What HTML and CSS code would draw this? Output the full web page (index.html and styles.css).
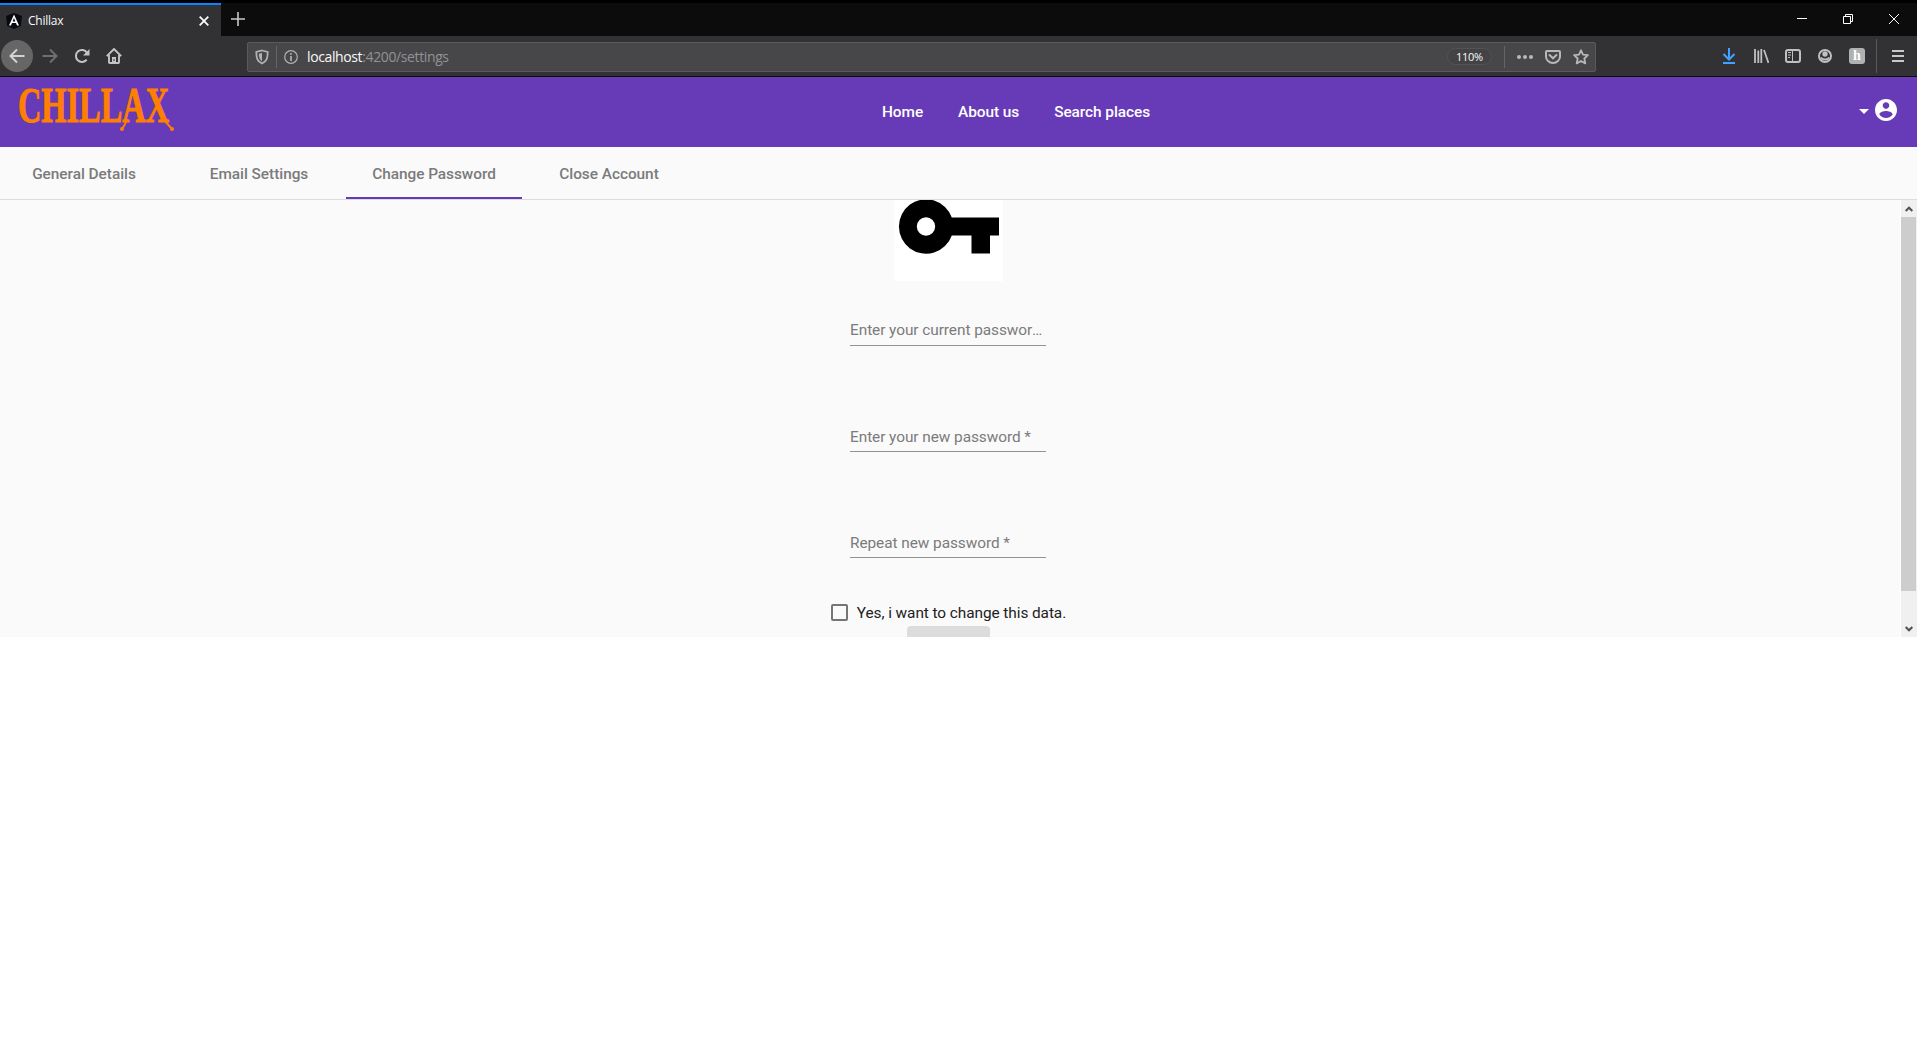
FILE: index.html
```html
<!DOCTYPE html>
<html lang="en">
<head>
<meta charset="utf-8">
<title>Chillax</title>
<link rel="stylesheet" href="styles.css">
</head>
<body>
<div class="titlebar">
  <div class="browser-tab">
    <svg class="favicon" width="16" height="16" viewBox="0 0 16 16"><path d="M8 0l8 3-1.200 10L8 16l-6.800-3L0 3z" fill="#080a12"/><path d="M8 1.500L3 12.500h2l1-2.500h4l1 2.500h2zM8 5l1.400 3.500H6.600z" fill="#fff" fill-rule="evenodd"/></svg>
    <span class="tab-title">Chillax</span>
    <svg class="tab-close" width="10" height="10" viewBox="0 0 10 10"><path d="M.7.7l8.600 8.600M9.300.7L.7 9.300" stroke="#f9f9fa" stroke-width="1.800"/></svg>
  </div>
  <svg class="new-tab" width="14" height="14" viewBox="0 0 14 14"><path d="M7 0v14M0 7h14" stroke="#c8c8c8" stroke-width="1.600"/></svg>
  <div class="window-controls">
    <svg width="10" height="10" viewBox="0 0 10 10"><path d="M0 4.500h10" stroke="#fff"/></svg>
    <svg width="10" height="10" viewBox="0 0 10 10"><path d="M.5 2.500h7v7h-7zM2.500 2.500v-2h7v7h-2" fill="none" stroke="#fff"/></svg>
    <svg width="10" height="10" viewBox="0 0 10 10"><path d="M0 0l10 10M10 0L0 10" stroke="#fff"/></svg>
  </div>
</div>
<div class="toolbar">
  <div class="nav-buttons">
    <span class="back"><svg width="16" height="16" viewBox="0 0 16 16"><path d="M15.500 8H1.500M8 1.500L1.500 8 8 14.500" fill="none" stroke="#d2d2d3" stroke-width="2"/></svg></span>
    <svg class="forward" width="16" height="16" viewBox="0 0 16 16"><path d="M.5 8h14M8 1.500L14.500 8 8 14.500" fill="none" stroke="#6f6f71" stroke-width="2"/></svg>
    <svg class="reload" width="16" height="16" viewBox="0 0 16 16"><path d="M12.700 11.600A6 6 0 1 1 13 4.700" fill="none" stroke="#c4c4c5" stroke-width="2"/><path d="M15.500 1v6.500H9z" fill="#c4c4c5"/></svg>
    <svg class="home" width="16" height="16" viewBox="0 0 16 16"><path d="M.8 8.200L8 1l7.200 7.200M3 7v7.200q0 .8.800.8h8.400q.8 0 .8-.8V7" fill="none" stroke="#c4c4c5" stroke-width="1.900"/><path d="M6 9h4v6H6z" fill="#c4c4c5"/><path d="M8 11v2" stroke="#323234"/></svg>
  </div>
  <div class="address">
    <svg class="shield" width="14" height="16" viewBox="0 0 14 16"><path d="M7 1.500L12.700 3c0 6-.8 9-5.700 11.500C2.100 12 1.300 9 1.300 3z" fill="none" stroke="#b1b1b3" stroke-width="1.800"/><path d="M7 4v8.200C4.500 10.500 3.900 8.500 3.800 4.700z" fill="#b1b1b3"/></svg>
    <i class="divider"></i>
    <svg class="info" width="14" height="14" viewBox="0 0 14 14"><circle cx="7" cy="7" r="6.300" fill="none" stroke="#b1b1b3" stroke-width="1.200"/><path d="M7 3v1.800M7 6v5" stroke="#b1b1b3" stroke-width="1.700"/></svg>
    <span class="url"><b>localhost</b>:4200/settings</span>
    <span class="zoom">110%</span>
    <i class="divider right"></i>
    <svg class="dots" width="16" height="4" viewBox="0 0 16 4"><g fill="#b8b8ba"><circle cx="2" cy="2" r="2"/><circle cx="8" cy="2" r="2"/><circle cx="14" cy="2" r="2"/></g></svg>
    <svg class="pocket" width="16" height="14" viewBox="0 0 16 14"><path d="M2 1h12q1 0 1 1v4.500a7 6.500 0 0 1-14 0V2q0-1 1-1z" fill="none" stroke="#b8b8ba" stroke-width="2"/><path d="M4.500 5L8 8.300 11.500 5" fill="none" stroke="#b8b8ba" stroke-width="2" stroke-linecap="round"/></svg>
    <svg class="star" width="16" height="16" viewBox="0 0 16 16"><path d="M8 1.300l2 4.300 4.900.6-3.600 3.300 1 4.900L8 12l-4.300 2.400 1-4.900L1.100 6.200 6 5.600z" fill="none" stroke="#b8b8ba" stroke-width="1.800" stroke-linejoin="round"/></svg>
  </div>
  <div class="extensions">
    <svg width="16" height="16" viewBox="0 0 16 16"><path d="M8 0v11M2.500 6L8 11.500 13.500 6M2 15h12" fill="none" stroke="#45a1ff" stroke-width="2"/></svg>
    <svg width="16" height="16" viewBox="0 0 16 16"><path d="M2 1v14M5.300 2.500V15M8.300 1v14M11 2l4.500 13" stroke="#c0c0c1" stroke-width="1.800"/></svg>
    <svg width="16" height="16" viewBox="0 0 16 16"><rect x="1" y="2" width="14" height="12" rx="2" fill="none" stroke="#c0c0c1" stroke-width="2"/><path d="M7.500 2v12M3 4.500h3M3 7h3M3 9.500h2" stroke="#c0c0c1"/></svg>
    <svg width="16" height="16" viewBox="0 0 16 16"><circle cx="8" cy="8" r="6" fill="none" stroke="#c0c0c1" stroke-width="2"/><circle cx="8" cy="6" r="2.700" fill="#c0c0c1"/><path d="M4 9.300q1 2.200 4 2.200t4-2.200" fill="none" stroke="#c0c0c1" stroke-width="1.800"/></svg>
    <span class="honey">h</span>
    <i class="menu-divider"></i>
    <svg width="12" height="12" viewBox="0 0 12 12"><path d="M0 1h12M0 6h12M0 11h12" stroke="#c8c8c9" stroke-width="2"/></svg>
  </div>
</div>
<header class="app-header">
  <svg class="logo" width="170" height="70" viewBox="0 0 170 70">
    <text class="logo-text" x="3" y="45" textLength="151" lengthAdjust="spacingAndGlyphs">CHILLAX</text>
    <path class="swash" d="M112 42q-3 9-6 10M149 43l8 9"/><circle cx="107" cy="52" r="2"/><circle cx="157" cy="52" r="2"/>
  </svg>
  <nav class="main-nav"><a>Home</a><a>About us</a><a>Search places</a></nav>
  <div class="account">
    <svg width="10" height="5" viewBox="0 0 10 5"><path d="M0 0h10L5 5z" fill="#fff"/></svg>
    <svg width="22" height="22" viewBox="2 2 20 20"><path fill="#fff" d="M12 2C6.480 2 2 6.480 2 12s4.480 10 10 10 10-4.480 10-10S17.520 2 12 2zm0 3c1.660 0 3 1.340 3 3s-1.340 3-3 3-3-1.340-3-3 1.340-3 3-3zm0 14.200c-2.500 0-4.710-1.280-6-3.220.03-1.990 4-3.080 6-3.080 1.990 0 5.970 1.090 6 3.080-1.290 1.940-3.500 3.220-6 3.220z"/></svg>
  </div>
</header>
<nav class="settings-tabs"><a>General Details</a><a>Email Settings</a><a class="active">Change Password</a><a>Close Account</a></nav>
<main class="panel">
  <form class="password-form">
    <svg class="key" width="109" height="81" viewBox="0 0 109 81"><path fill="#000" fill-rule="evenodd" d="M57.800 17.500H105v18h-9v18H77.500v-18H57.800A27.200 27.200 0 1 1 57.800 17.500zM32 17.300a9.200 9.200 0 1 0 0 18.400 9.200 9.200 0 0 0 0-18.400z"/></svg>
    <label class="field first">Enter your current password *</label>
    <label class="field">Enter your new password *</label>
    <label class="field">Repeat new password *</label>
    <label class="confirm"><i class="box"></i>Yes, i want to change this data.</label>
    <div class="submit"></div>
  </form>
  <div class="scrollbar">
    <svg class="arrow" width="8" height="6" viewBox="0 0 8 6"><path d="M.7 5L4 1.700 7.300 5" fill="none" stroke="#505050" stroke-width="2"/></svg>
    <div class="thumb"></div>
    <svg class="arrow down" width="8" height="6" viewBox="0 0 8 6"><path d="M.7 1L4 4.300 7.300 1" fill="none" stroke="#505050" stroke-width="2"/></svg>
  </div>
</main>
</body>
</html>
```
FILE: styles.css
```css
* { box-sizing: border-box; }
body { margin: 0; background: #fff; font-family: Roboto, sans-serif; overflow: hidden; }
svg { display: block; flex: none; }

.titlebar { height: 36px; border-top: 3px solid #000; background: #0c0c0d; display: flex; align-items: flex-start; font-family: "Open Sans", sans-serif; }
.browser-tab { width: 221px; height: 33px; border-top: 2px solid #0a84ff; background: #323234; display: flex; align-items: center; padding: 0 12px 0 6px; }
.tab-title { color: #f9f9fa; font-size: 12px; letter-spacing: -.25px; margin-left: 6px; flex: 1; }
.new-tab { margin: 9px 0 0 10px; }
.window-controls { margin: 11px 18px 0 auto; display: flex; gap: 36px; }

.toolbar { height: 41px; border-bottom: 1px solid #0c0c0d; background: #323234; display: flex; align-items: center; font-family: "Open Sans", sans-serif; }
.nav-buttons { width: 247px; display: flex; align-items: center; padding-left: 1px; }
.back { width: 32px; height: 32px; border-radius: 50%; background: #666667; display: flex; align-items: center; justify-content: center; }
.forward { margin-left: 9px; }
.reload { margin-left: 16px; }
.home { margin-left: 16px; }
.address { width: 1349px; height: 30px; margin-top: 1px; border: 1px solid #5a5a5c; border-radius: 2px; background: #474749; display: flex; align-items: center; padding: 0 6px 0 7px; }
.divider { width: 1px; height: 22px; background: #5f6670; margin: 0 7px; }
.url { color: #929294; font-size: 14px; letter-spacing: -.38px; margin-left: 9px; flex: 1; }
.url b { color: #f9f9fa; font-weight: 400; }
.zoom { width: 45px; height: 17px; border-radius: 9px; border: 1px solid #535355; background: #434345; color: #f9f9fa; font-size: 11px; letter-spacing: -.3px; line-height: 16px; text-align: center; }
.divider.right { margin: 0 12px; }
.pocket { margin-left: 12px; }
.star { margin-left: 12px; }
.extensions { margin-left: auto; padding-right: 13px; display: flex; align-items: center; gap: 16px; }
.honey { width: 16px; height: 16px; border-radius: 3px; background: #b1b1b3; color: #fff; font: bold 14px/15px "Liberation Serif", serif; text-align: center; }
.menu-divider { width: 1px; height: 34px; background: #59595b; margin: 0 -1px 0 -5px; }

.app-header { height: 70px; background: #673ab7; display: grid; grid-template-columns: 882px 1fr auto; align-items: center; }
.logo { margin-left: 15px; fill: #ff8000; }
.logo-text { font: bold 50px "Liberation Serif", serif; stroke: #ff8000; stroke-width: 1; }
.swash { fill: none; stroke: #ff8000; stroke-width: 2; }
.main-nav { display: flex; gap: 35px; color: #fff; font-size: 15.400px; letter-spacing: -.06px; font-weight: 500; }
.account { display: flex; align-items: center; gap: 6px; padding: 0 20px 5px 0; margin-top: 1px; }
.account svg:first-child { margin-top: 2px; }

.settings-tabs { height: 53px; background: #fafafa; border-bottom: 1px solid #dcdcdc; display: grid; grid-template-columns: 171px 175px 176px 174px; grid-template-rows: 52px; color: #7b7b7b; font-size: 15.400px; letter-spacing: -.04px; font-weight: 500; line-height: 54px; text-align: center; }
.settings-tabs a:first-child { padding-right: 3px; }
.settings-tabs a:nth-child(2) { padding-left: 1px; }
.settings-tabs .active { border-bottom: 2px solid #673ab7; }

.panel { height: 437px; background: #fafafa; display: flex; overflow: hidden; }
.password-form { width: 1896px; display: flex; flex-direction: column; align-items: center; }
.key { background: #fff; flex: none; }
.field { width: 196px; flex: none; height: 26px; margin-top: 80px; border-bottom: 1px solid #929292; color: #7b7b7b; font-size: 15.400px; letter-spacing: -.06px; line-height: 23px; overflow: hidden; white-space: nowrap; text-overflow: ellipsis; }
.field.first { margin-top: 39px; line-height: 21px; }
.confirm { display: flex; align-items: center; height: 20px; flex: none; margin: 45px 0 0 1px; font-size: 15.400px; letter-spacing: -.07px; color: #212121; white-space: nowrap; }
.box { width: 17px; height: 17px; border: 2px solid #757575; border-radius: 2px; margin: -1px 9px 0 0; }
.submit { width: 83px; height: 40px; flex: none; margin-top: 3px; border-radius: 4px; background: #dcdcdc; }
.scrollbar { width: 17px; margin-left: auto; background: #f0f0f0; border-left: 1px solid #fff; border-right: 1px solid #f0f0f0; display: flex; flex-direction: column; align-items: center; }
.arrow { margin: 6px 0 5px; }
.thumb { width: 15px; height: 374px; background: #cdcdcd; }
.arrow.down { margin: auto 0 5px; }
```
